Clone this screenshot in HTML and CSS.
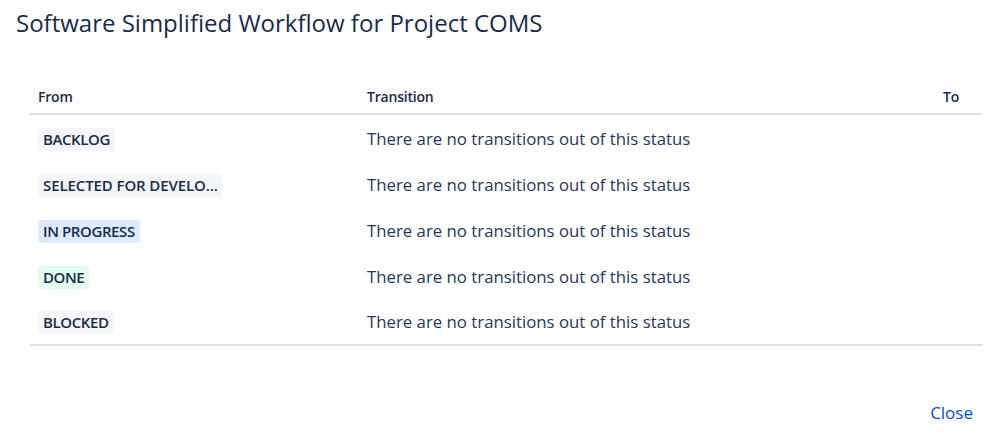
FILE: index.html
```html
<!DOCTYPE html>
<html lang="en">
<head>
    <meta charset="UTF-8">
    <title>Software Simplified Workflow for Project COMS</title>
    <link rel="stylesheet" href="styles.css">
</head>
<body>
    <div class="dialog">
        <h1 class="dialog-title">Software Simplified Workflow for Project COMS</h1>

        <div class="workflow">
            <div class="wf-head">
                <div class="col-from">From</div>
                <div class="col-transition">Transition</div>
                <div class="col-to">To</div>
            </div>

            <div class="wf-row">
                <div class="col-from"><span class="lozenge">BACKLOG</span></div>
                <div class="col-transition">There are no transitions out of this status</div>
                <div class="col-to"></div>
            </div>
            <div class="wf-row">
                <div class="col-from"><span class="lozenge lozenge-cut" title="SELECTED FOR DEVELOPMENT">SELECTED FOR DEVELO...</span></div>
                <div class="col-transition">There are no transitions out of this status</div>
                <div class="col-to"></div>
            </div>
            <div class="wf-row">
                <div class="col-from"><span class="lozenge lozenge-progress">IN PROGRESS</span></div>
                <div class="col-transition">There are no transitions out of this status</div>
                <div class="col-to"></div>
            </div>
            <div class="wf-row">
                <div class="col-from"><span class="lozenge lozenge-done">DONE</span></div>
                <div class="col-transition">There are no transitions out of this status</div>
                <div class="col-to"></div>
            </div>
            <div class="wf-row">
                <div class="col-from"><span class="lozenge">BLOCKED</span></div>
                <div class="col-transition">There are no transitions out of this status</div>
                <div class="col-to"></div>
            </div>
        </div>

        <div class="dialog-footer">
            <a href="#" class="close-link">Close</a>
        </div>
    </div>
</body>
</html>
```

FILE: styles.css
```css
body {
    margin: 0;
    padding: 0;
    background-color: #fff;
    color: #172b4d;
    font-family: 'Open Sans', 'Noto Sans', sans-serif;
}

.dialog {
    padding: 6px 17px 0 16px;
}

.dialog-title {
    margin: 0;
    font-size: 24px;
    font-weight: 400;
    line-height: 34px;
    color: #172b4d;
}

.workflow {
    margin: 40px 0 0 13px;
}

.wf-head,
.wf-row {
    display: grid;
    grid-template-columns: 338px 1fr 60px;
    align-items: center;
}

.wf-head {
    height: 33px;
    border-bottom: 2px solid #dfe1e6;
    font-size: 14px;
    font-weight: 600;
    letter-spacing: -0.2px;
}

.wf-row {
    height: 46px;
    font-size: 16.8px;
    color: #253858;
}

.wf-row:last-child {
    height: 45px;
    border-bottom: 2px solid #dfe1e6;
}

.col-from {
    padding-left: 9px;
}

.col-to {
    text-align: right;
    padding-right: 23px;
}

.lozenge {
    display: inline-block;
    padding: 0 5px;
    border-radius: 3px;
    background-color: #f4f5f7;
    font-size: 15px;
    font-weight: 600;
    line-height: 23px;
    letter-spacing: -0.4px;
    white-space: nowrap;
    vertical-align: middle;
    color: #172b4d;
}

.lozenge-cut {
    letter-spacing: -0.1px;
}

.lozenge-progress {
    background-color: #deebff;
}

.lozenge-done {
    background-color: #e3fcef;
}

.dialog-footer {
    display: flex;
    justify-content: flex-end;
    padding: 55px 9px 0 0;
}

.close-link {
    font-size: 17px;
    color: #0052cc;
    text-decoration: none;
}
```
